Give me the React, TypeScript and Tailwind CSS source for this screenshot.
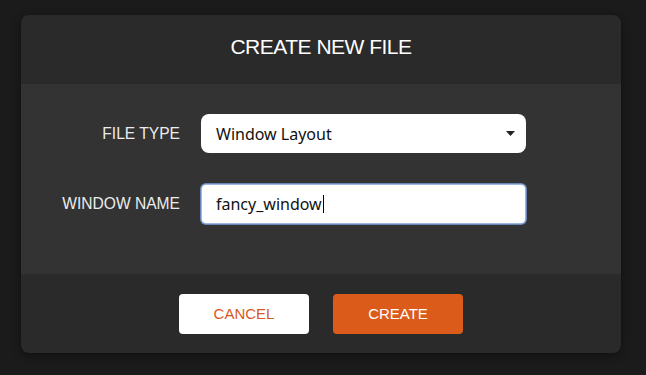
import React from "react"

const sans = "font-['Liberation_Sans',Arial,sans-serif]"

function Field({ label, children }: { label: string; children: React.ReactNode }) {
  return (
    <div className="flex items-center">
      <div className="w-[159px] text-right text-[15.6px] leading-none text-[#ececec]">{label}</div>
      <div className="ml-[21px] w-[325px]">{children}</div>
    </div>
  )
}

export default function App() {
  return (
    <div className={`w-[646px] h-[375px] bg-[#1b1b1b] pt-[15px] pl-[21px] ${sans}`}>
      <div className="w-[600px] rounded-[8px] overflow-hidden bg-[#2a2a2a] shadow-[0_2px_10px_rgba(0,0,0,0.45)]">
        {/* Header */}
        <div className="h-[69px] flex items-center justify-center pb-[7px]">
          <h1 className="text-[21px] leading-none tracking-[-0.5px] text-white">
            CREATE NEW FILE
          </h1>
        </div>

        {/* Body */}
        <div className="bg-[#333333] pt-[30px] pb-[51px] flex flex-col gap-[32px]">
          <Field label="FILE TYPE">
            <div className="h-[39px] rounded-[8px] bg-white flex items-center pl-[15px] pr-[11px] font-['Noto_Sans',sans-serif] text-[16px] text-[#111]">
              <span className="flex-1">Window Layout</span>
              <svg width="9" height="5" viewBox="0 0 9 5">
                <path d="M0 0h9L4.5 5z" fill="#222" />
              </svg>
            </div>
          </Field>
          <Field label="WINDOW NAME">
            <div className="h-[38px] mx-[1px] rounded-[4px] bg-white flex items-center pl-[14px] font-['Noto_Sans',sans-serif] text-[16px] text-[#111] shadow-[0_0_0_1px_#9cb6df,0_0_0_2px_#6a86b8]">
              <span>fancy_window</span>
              <span className="w-px h-[18px] bg-black ml-px" />
            </div>
          </Field>
        </div>

        {/* Footer */}
        <div className="h-[79px] flex items-center justify-center gap-6 pt-px">
          <button className="w-[130px] h-10 rounded-[4px] bg-white text-[15px] text-[#d9591c]">CANCEL</button>
          <button className="w-[130px] h-10 rounded-[4px] bg-[#db5b1a] text-[15px] text-white">CREATE</button>
        </div>
      </div>
    </div>
  )
}
